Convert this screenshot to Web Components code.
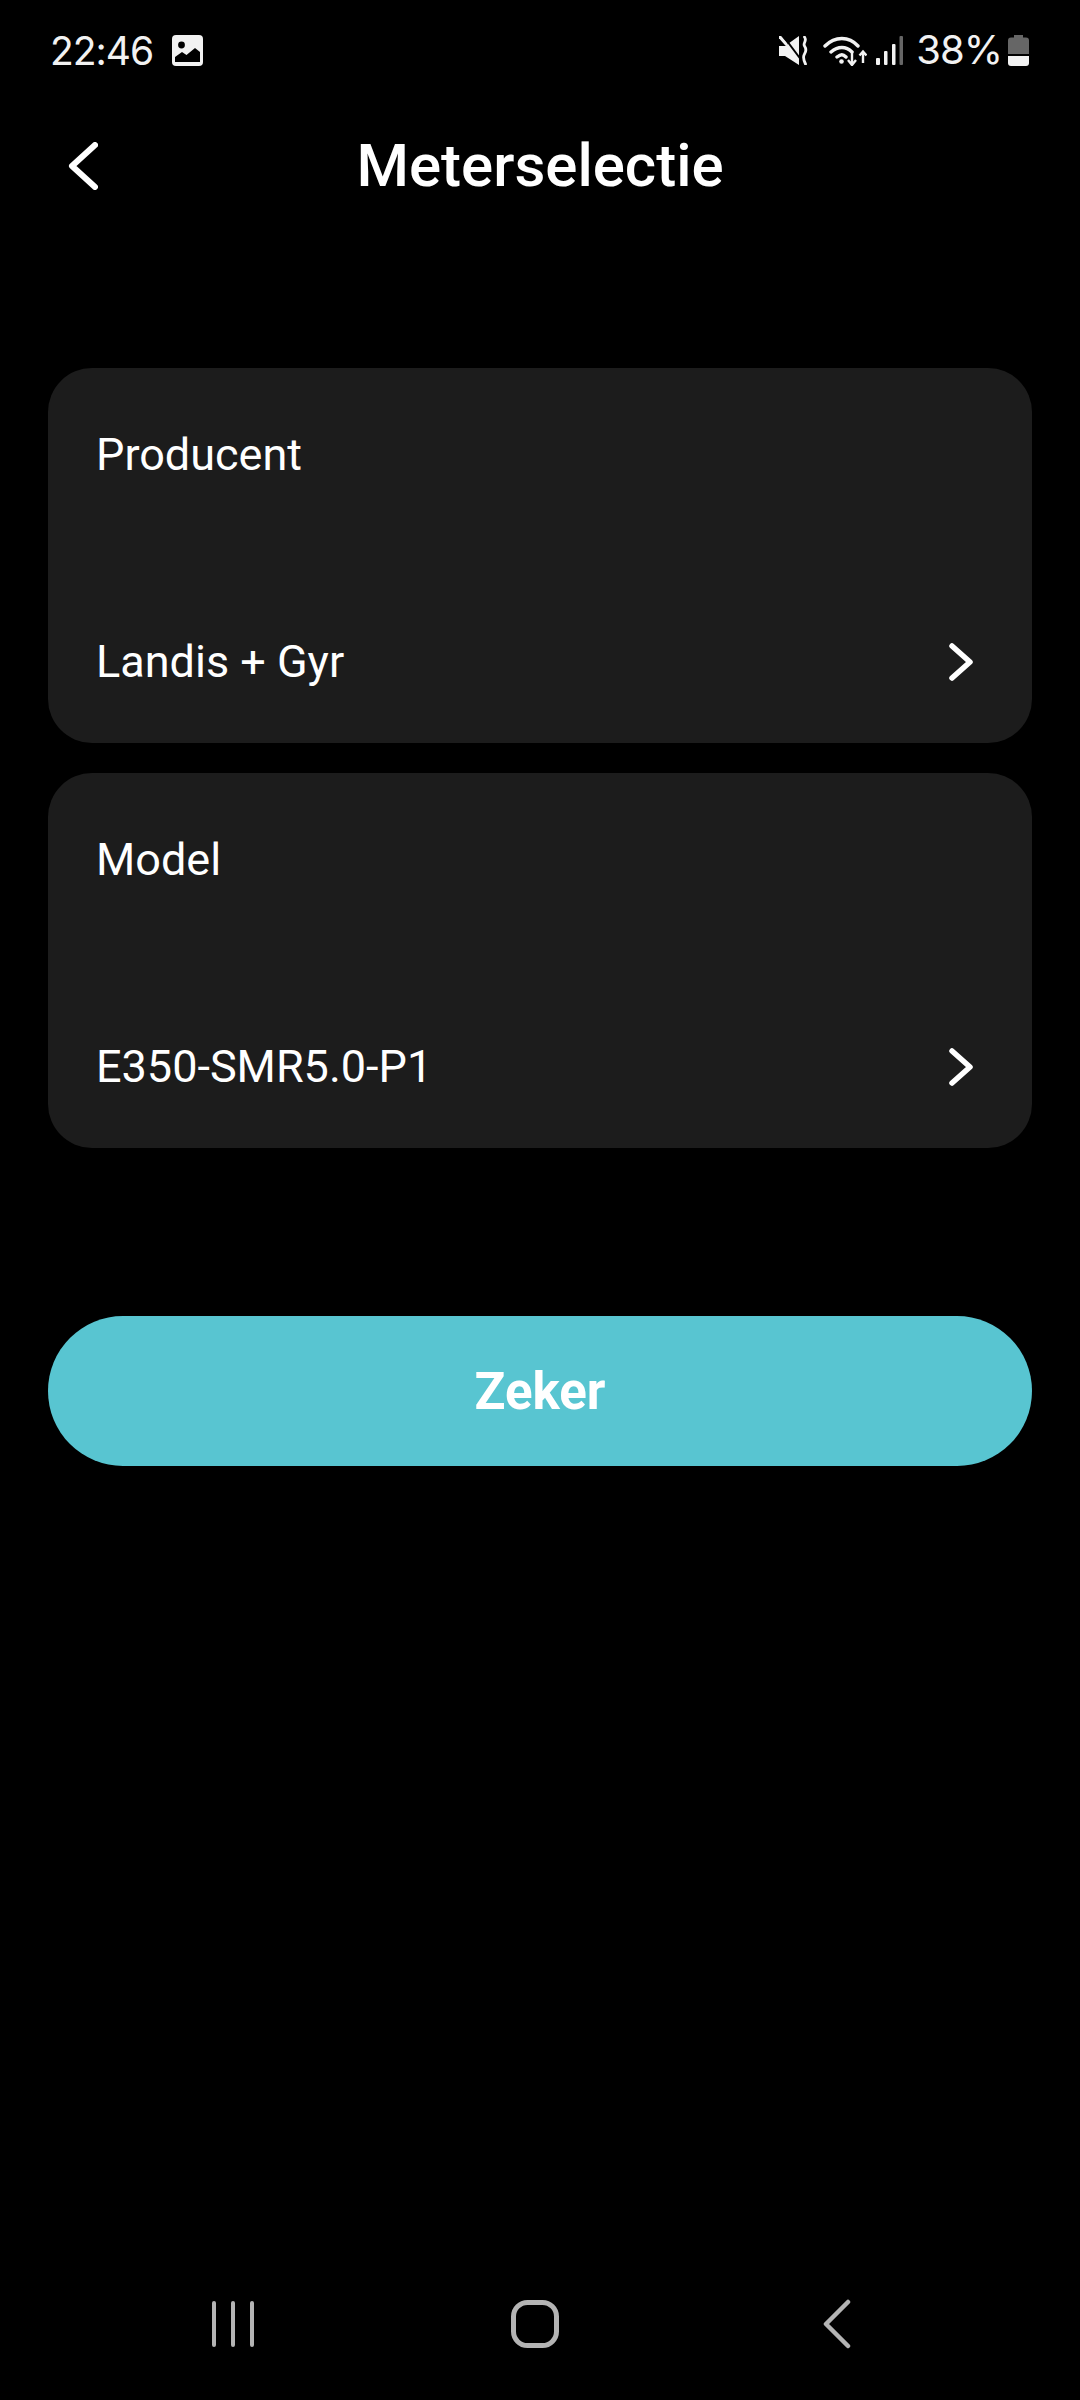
<!DOCTYPE html>
<html lang="nl">
<head>
<meta charset="utf-8">
<title>Meterselectie</title>
<style>
  html, body { margin: 0; background: #000; }
  body { width: 1080px; height: 2400px; display: flex; flex-direction: column; color: #fff; font-family: Roboto, "Noto Sans", sans-serif; }
  main { flex: 1; display: flex; flex-direction: column; padding: 136px 48px 0; }
  select-card + select-card { margin-top: 30px; }
  primary-button { margin-top: 168px; }
</style>
</head>
<body>
<status-bar></status-bar>
<app-header>Meterselectie</app-header>
<main>
  <select-card label="Producent">Landis + Gyr</select-card>
  <select-card label="Model">E350-SMR5.0-P1</select-card>
  <primary-button>Zeker</primary-button>
</main>
<nav-bar></nav-bar>

<script>
/** Android status bar with time and system icons */
class StatusBar extends HTMLElement {
  connectedCallback() {
    this.attachShadow({ mode: "open" }).innerHTML = `
      <style>
        :host { display: flex; align-items: center; height: 100px; padding: 0 51px 0 50px; color: #f2f2f2; font: 400 39px/1 Inter, Roboto, sans-serif; }
        .time { letter-spacing: -1px; }
        .gallery { margin-left: 19px; }
        .spacer { flex: 1; }
        svg { display: block; }
        .mute { margin-right: 15px; }
        .wifi { margin-right: 9px; }
        .signal { margin-right: 13px; }
        .pct { margin-right: 6px; font-size: 40px; letter-spacing: -1px; }
      </style>
      <span class="time">22:46</span>
      <svg class="gallery" width="31" height="31" viewBox="0 0 31 31">
        <rect width="31" height="31" rx="4" fill="#f2f2f2"/>
        <circle cx="9.500" cy="10" r="3.400" fill="#000"/>
        <path d="M3 27v-5l7-5 4.500 3L23 13l5 4v10z" fill="#000"/>
      </svg>
      <span class="spacer"></span>
      <svg class="mute" width="29" height="29" viewBox="0 0 29 29">
        <path d="M0 10h6L20 0v29L6 20H0z" fill="#f2f2f2"/>
        <path d="M1 1l6 7" stroke="#f2f2f2" stroke-width="3" stroke-linecap="round"/>
        <path d="M5 1l18 24" stroke="#000" stroke-width="2"/>
        <path d="M25.500 1c3 4-2 6 0 9s2 5 0 8-1 6 1 10" fill="none" stroke="#f2f2f2" stroke-width="2.800" stroke-linecap="round"/>
      </svg>
      <svg class="wifi" width="44" height="32" viewBox="0 0 44 32">
        <path d="M2 12C12 2 26 2 35 12M8 18c7-6 15-6 21 0M14 23c4-3 6-3 9 0" fill="none" stroke="#f2f2f2" stroke-width="3.400" stroke-linecap="round"/>
        <circle cx="18.500" cy="27.500" r="2.300" fill="#f2f2f2"/>
        <path d="M29 17v13M25 26l4 5 4-5M40 29V18M36.500 21.500l3.500-4 3.500 4" fill="none" stroke="#f2f2f2" stroke-width="2.400"/>
      </svg>
      <svg class="signal" width="27" height="29" viewBox="0 0 27 29">
        <rect x="0" y="22" width="4" height="7" rx="1" fill="#f2f2f2"/>
        <rect x="8" y="15" width="3.500" height="14" rx="1" fill="#f2f2f2"/>
        <rect x="16" y="8" width="3.500" height="21" rx="1" fill="#f2f2f2"/>
        <rect x="23.500" y="0" width="3.500" height="29" rx="1" fill="#666"/>
      </svg>
      <span class="pct">38%</span>
      <svg width="21" height="31" viewBox="0 0 21 31">
        <path d="M6 0h9v2.500h3a3 3 0 0 1 3 3V19H0V5.500a3 3 0 0 1 3-3h3z" fill="#666"/>
        <path d="M0 21h21v7a3 3 0 0 1-3 3H3a3 3 0 0 1-3-3z" fill="#f2f2f2"/>
      </svg>`;
  }
}

/** Page title bar with back button */
class AppHeader extends HTMLElement {
  connectedCallback() {
    this.attachShadow({ mode: "open" }).innerHTML = `
      <style>
        :host { display: grid; grid-template-columns: 1fr auto 1fr; align-items: center; height: 132px; }
        .back { padding-left: 68px; display: flex; }
        h1 { margin: 0; font: 500 60px/1 Roboto, sans-serif; color: #fff; }
      </style>
      <span class="back">
        <svg width="30" height="48" viewBox="0 0 30 48">
          <path d="M27 3L4 24l23 21" fill="none" stroke="#fff" stroke-width="6" stroke-linecap="round" stroke-linejoin="round"/>
        </svg>
      </span>
      <h1><slot></slot></h1>
      <span></span>`;
  }
}

/** Card with a label on top and the picked value with a chevron below */
class SelectCard extends HTMLElement {
  connectedCallback() {
    this.attachShadow({ mode: "open" }).innerHTML = `
      <style>
        :host { display: flex; flex-direction: column; justify-content: space-between; box-sizing: border-box; height: 375px; padding: 57px 59px 51px 48px; background: #1c1c1c; border-radius: 44px; font: 400 45px/60px Roboto, sans-serif; color: #fff; }
        .row { display: flex; align-items: center; justify-content: space-between; }
        svg { display: block; }
      </style>
      <div class="label"></div>
      <div class="row">
        <span><slot></slot></span>
        <svg width="24" height="38" viewBox="0 0 24 38">
          <path d="M3 3l18 16L3 35" fill="none" stroke="#fff" stroke-width="5.500" stroke-linecap="round" stroke-linejoin="round"/>
        </svg>
      </div>`;
    this.shadowRoot.querySelector(".label").textContent = this.getAttribute("label");
  }
}

/** Full width pill button */
class PrimaryButton extends HTMLElement {
  connectedCallback() {
    this.attachShadow({ mode: "open" }).innerHTML = `
      <style>
        :host { display: flex; align-items: center; justify-content: center; height: 150px; border-radius: 75px; background: #58c5d1; color: #fff; font: 700 51px/1 Roboto, sans-serif; }
      </style>
      <slot></slot>`;
  }
}

/** Android navigation buttons at the bottom */
class NavBar extends HTMLElement {
  connectedCallback() {
    this.attachShadow({ mode: "open" }).innerHTML = `
      <style>
        :host { display: grid; grid-template-columns: repeat(3, 302px); justify-items: center; align-items: center; height: 100px; padding: 0 0 26px 82px; }
        svg { display: block; }
      </style>
      <svg width="44" height="48" viewBox="0 0 44 48" stroke="#b4b4b4" stroke-width="4" stroke-linecap="round" fill="none">
        <path d="M3 3v42M22 3v42M41 3v42"/>
      </svg>
      <svg width="48" height="48" viewBox="0 0 48 48" fill="none">
        <rect x="2.500" y="2.500" width="43" height="43" rx="14" stroke="#b4b4b4" stroke-width="5"/>
      </svg>
      <svg width="28" height="50" viewBox="0 0 28 50" fill="none">
        <path d="M25 3L3 25l22 22" stroke="#b4b4b4" stroke-width="4.500" stroke-linecap="round" stroke-linejoin="round"/>
      </svg>`;
  }
}

customElements.define("status-bar", StatusBar);
customElements.define("app-header", AppHeader);
customElements.define("select-card", SelectCard);
customElements.define("primary-button", PrimaryButton);
customElements.define("nav-bar", NavBar);
</script>
</body>
</html>
